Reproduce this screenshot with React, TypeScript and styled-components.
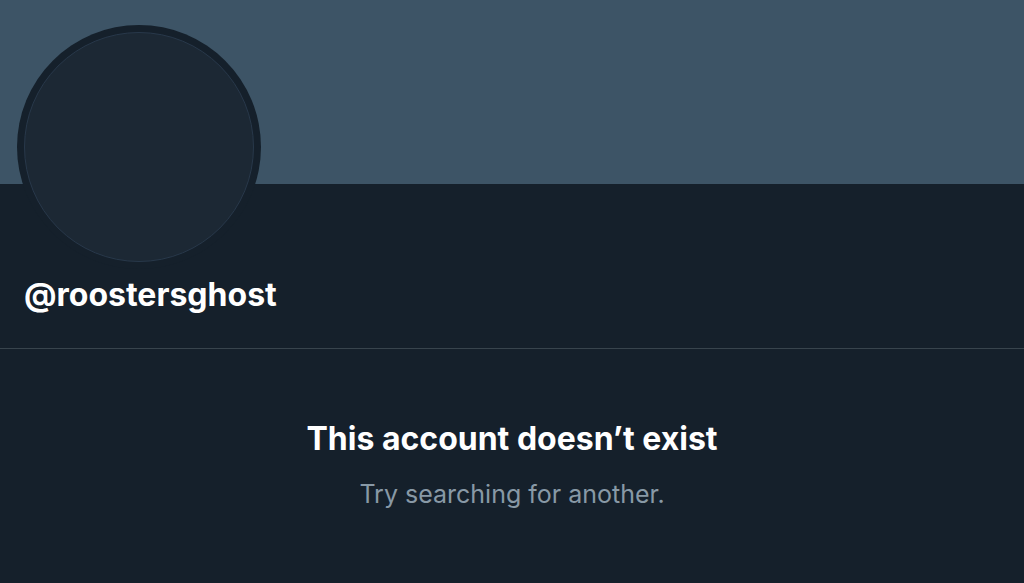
import React from "react";
import styled, { createGlobalStyle } from "styled-components";

const Global = createGlobalStyle`
  html, body { margin: 0; padding: 0; background: #15202b; }
  body { font-family: Inter, "Noto Sans", sans-serif; -webkit-font-smoothing: antialiased; }
`;

const Page = styled.div`
  width: 1024px;
  height: 583px;
  background: #15202b;
  overflow: hidden;
  display: flex;
  flex-direction: column;
`;

const Banner = styled.div`
  height: 184px;
  background: #3d5466;
  flex-shrink: 0;
`;

const Header = styled.div`
  position: relative;
  padding: 0 24px;
  height: 164px;
  border-bottom: 1px solid #38444d;
  display: flex;
  flex-direction: column;
  justify-content: flex-start;
`;

const AvatarRing = styled.div`
  position: absolute;
  left: 17px;
  top: -159px;
  width: 244px;
  height: 244px;
  border-radius: 50%;
  background: #15202b;
  display: flex;
  align-items: center;
  justify-content: center;
`;

const AvatarInner = styled.div`
  width: 228px;
  height: 228px;
  border-radius: 50%;
  background: #1c2834;
  border: 1px solid #28384a;
`;

const Handle = styled.div`
  margin-top: 93px;
  font-size: 32px;
  font-weight: 700;
  color: #ffffff;
  line-height: 36px;
`;

const Empty = styled.div`
  display: flex;
  flex-direction: column;
  align-items: center;
  padding-top: 72px;
`;

const Title = styled.div`
  font-size: 32px;
  font-weight: 700;
  color: #ffffff;
  line-height: 36px;
`;

const Sub = styled.div`
  margin-top: 23px;
  font-size: 25px;
  color: #8899a6;
  line-height: 28px;
`;

export default function App() {
  return (
    <Page>
      <Global />
      <Banner />
      <Header>
        <AvatarRing>
          <AvatarInner />
        </AvatarRing>
        <Handle>@roostersghost</Handle>
      </Header>
      <Empty>
        <Title>This account doesn’t exist</Title>
        <Sub>Try searching for another.</Sub>
      </Empty>
    </Page>
  );
}
